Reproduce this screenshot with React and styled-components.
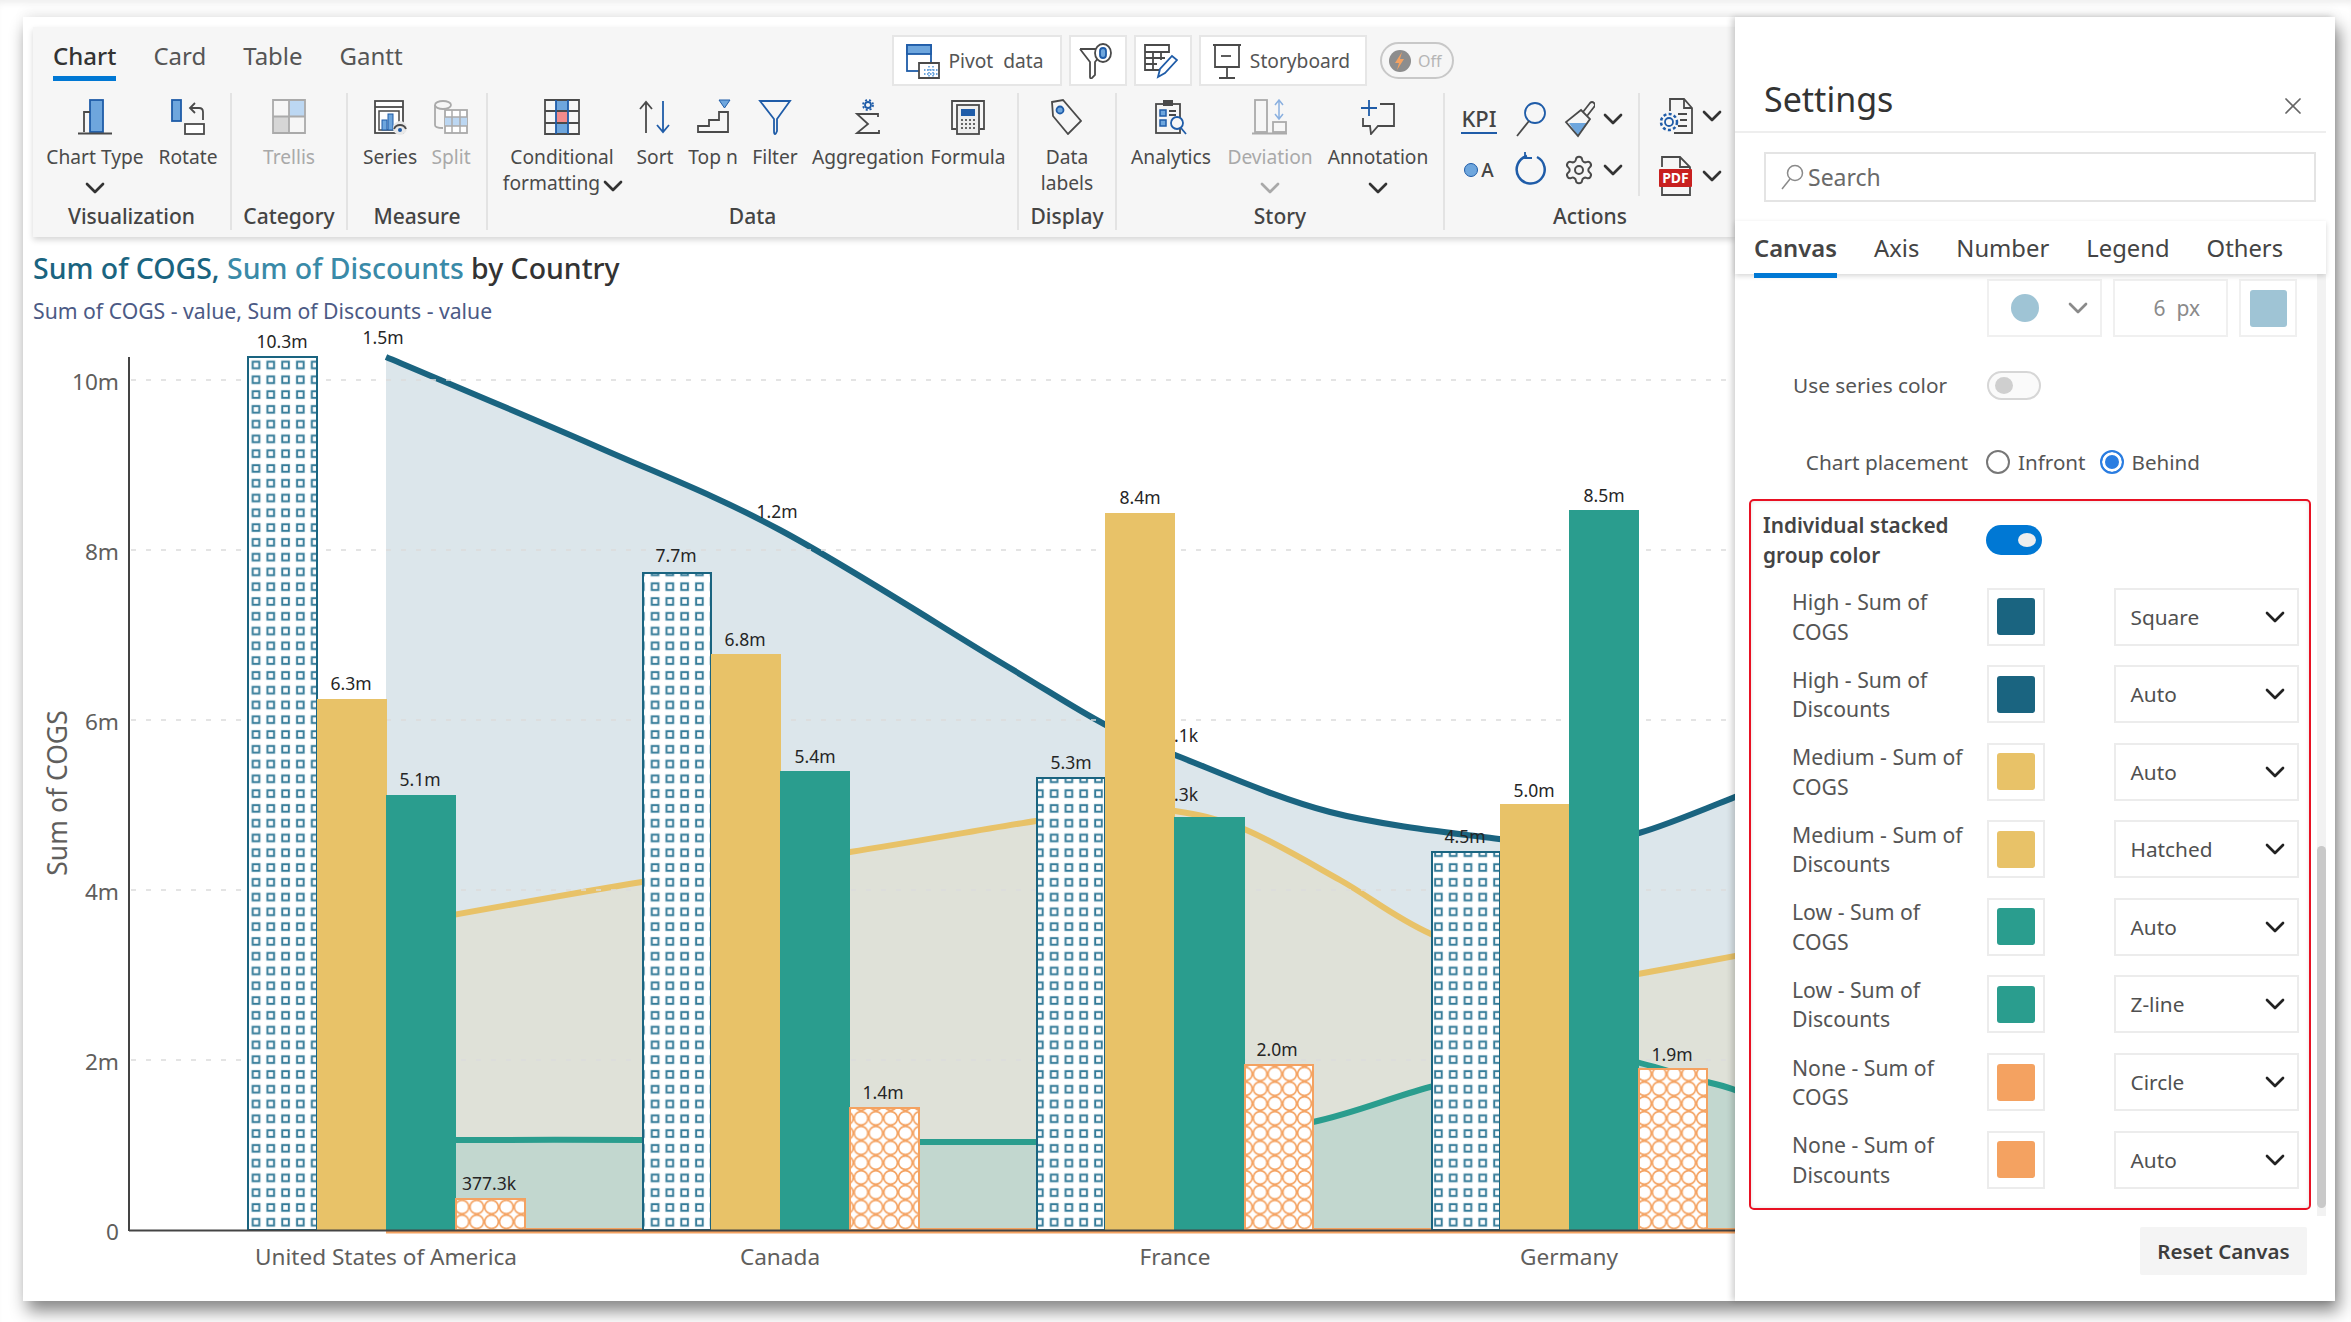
import React from "react";
import styled, { createGlobalStyle } from "styled-components";
import { ChevronDown, X, Settings as GearIcon } from "lucide-react";

const FONT = `"Noto Sans", "Open Sans", sans-serif`;
const NAVY = "#1a6480";
const GOLD = "#e8c268";
const TEAL = "#2a9d8e";
const ORANGE = "#f4a261";
const ICON_BLUE = "#6ea6dd";
const ICON_DARK = "#1f5ca8";
const ICON_GRAY = "#4a4a4a";

const GlobalStyle = createGlobalStyle`
html, body {
  margin: 0;
  padding: 0;
  background: #fff;
  font-family: ${FONT};
}
* { box-sizing: border-box; }
`;

const Page = styled.div`
  width: 2351px;
  height: 1322px;
  overflow: hidden;
  padding: 17px 16px 21px 23px;
  box-shadow: inset 0 6px 6px -3px rgba(0, 0, 0, 0.07);
`;
const Card = styled.div`
  display: flex;
  height: 1284px;
  background: #fff;
  box-shadow: 4px 10px 16px rgba(0, 0, 0, 0.48), 0 -8px 12px rgba(0, 0, 0, 0.03);
`;
const Main = styled.div`
  width: 1712px;
  flex: none;
  padding: 10px 0 0 10px;
  overflow: hidden;
`;
const Ribbon = styled.div`
  position: relative;
  z-index: 2;
  height: 210px;
  background: #f6f6f6;
  box-shadow: 0 3px 6px rgba(0, 0, 0, 0.16);
`;
const TabRow = styled.div`
  display: flex;
  align-items: flex-start;
  height: 66px;
  padding: 8px 0 0 20px;
`;
const TabList = styled.div`
  display: flex;
  gap: 37px;
  width: 350px;
`;
const Tab = styled.div`
  font-size: 24px;
  line-height: 41px;
  height: 46px;
  color: ${(p) => (p.$active ? "#333" : "#555")};
  font-weight: ${(p) => (p.$active ? 500 : 400)};
  border-bottom: ${(p) => (p.$active ? "5px solid #0078d4" : "none")};
`;
const QuickButtons = styled.div`
  display: flex;
  align-items: center;
  margin-left: 489px;
  gap: 7px;
`;
const QuickButton = styled.div`
  display: flex;
  align-items: center;
  justify-content: center;
  gap: 8px;
  width: ${(p) => p.$w}px;
  height: 51px;
  padding-right: 4px;
  background: #fff;
  border: 2px solid #e6e6e6;
  font-size: 19.2px;
  color: #555;
`;
const SpeedToggle = styled.div`
  display: flex;
  align-items: center;
  gap: 6px;
  width: 74px;
  height: 37px;
  margin-left: 6px;
  padding-left: 6px;
  border: 2px solid #c8c8c8;
  border-radius: 19px;
  font-size: 16px;
  color: #b5b5b5;
`;
const GroupRow = styled.div`
  display: flex;
  height: 137px;
`;
const Group = styled.div`
  display: flex;
  flex-direction: column;
  width: ${(p) => p.$w}px;
  flex: ${(p) => (p.$last ? "1" : "none")};
  padding-left: ${(p) => p.$pad || 0}px;
  border-right: ${(p) => (p.$last ? "none" : "2px solid #e3e3e3")};
`;
const GroupItems = styled.div`
  display: flex;
  height: 110px;
`;
const GroupLabel = styled.div`
  margin-left: ${(p) => (p.$pad ? -p.$pad : 0)}px;
  text-align: center;
  font-size: 21px;
  line-height: 28px;
  font-weight: 500;
  color: #444;
`;
const RibbonItem = styled.div`
  display: flex;
  flex-direction: column;
  align-items: center;
  width: ${(p) => p.$w}px;
  flex: none;
  padding-top: 5px;
  color: ${(p) => (p.$off ? "#a9a9a9" : "#4a4a4a")};
`;
const IconBox = styled.div`
  display: flex;
  align-items: center;
  justify-content: center;
  height: 37px;
  margin-bottom: 9px;
`;
const ItemText = styled.div`
  text-align: center;
  font-size: 19.2px;
  line-height: 26px;
  white-space: nowrap;
`;
const Chev = styled(ChevronDown).attrs({ size: 32, strokeWidth: 2 })`
  flex: none;
  margin: -8px;
`;
const ChevronLine = styled.div`
  display: flex;
  align-items: center;
  justify-content: center;
  height: 26px;
  margin-top: 5px;
  color: ${(p) => (p.$off ? "#a9a9a9" : "#333")};
`;
const InlineChevron = styled.span`
  display: inline-block;
  vertical-align: -4px;
  margin-left: 5px;
  color: #333;
  line-height: 0;
`;
const ActionItems = styled.div`
  display: flex;
  height: 110px;
`;
const ActionGrid = styled.div`
  display: grid;
  grid-template-columns: 54px 50px 72px;
  grid-auto-rows: 51px;
  align-items: center;
  justify-items: center;
  width: 195px;
  height: 103px;
  padding-left: 7px;
  border-right: 2px solid #e3e3e3;
`;
const ChevronPair = styled.div`
  display: flex;
  align-items: center;
  gap: 10px;
  color: #333;
`;
const ExportColumn = styled.div`
  display: flex;
  flex-direction: column;
  padding: 4px 0 0 18px;
  gap: 20px;
`;
const KpiMark = styled.div`
  font-size: 22px;
  line-height: 28px;
  font-weight: 500;
  color: #444;
  border-bottom: 2px solid ${ICON_DARK};
`;
const LegendMark = styled.div`
  display: flex;
  align-items: center;
  gap: 3px;
  font-size: 19px;
  font-weight: 500;
  color: #444;
`;
const LegendDot = styled.span`
  width: 14px;
  height: 14px;
  border-radius: 50%;
  background: ${ICON_BLUE};
  border: 1px solid ${ICON_DARK};
`;
const ChartTitle = styled.div`
  margin: 11px 0 0 0;
  font-size: 28.45px;
  line-height: 40px;
  font-weight: 500;
  color: #333;
  white-space: nowrap;
`;
const TitlePart = styled.span`
  color: ${(p) => p.$c};
`;
const ChartSubtitle = styled.div`
  margin: 8px 0 0 0;
  font-size: 21.2px;
  line-height: 30px;
  color: #4c5a85;
  white-space: nowrap;
`;
const ChartSvg = styled.svg`
  display: block;
  margin-top: -4px;
`;
const DataLabel = styled.text`
  font-size: 17.5px;
  fill: #252525;
  text-anchor: middle;
  dominant-baseline: central;
`;
const AxisLabel = styled.text`
  font-size: ${(p) => p.$size || 22.6}px;
  fill: #605e5c;
  text-anchor: ${(p) => p.$anchor || "middle"};
  dominant-baseline: central;
`;

const Panel = styled.div`
  position: relative;
  z-index: 3;
  display: flex;
  flex-direction: column;
  flex: 1;
  padding-right: 9px;
  background: #fff;
  box-shadow: -3px 0 6px rgba(0, 0, 0, 0.18);
`;
const PanelHead = styled.div`
  display: flex;
  align-items: flex-start;
  justify-content: space-between;
  height: 116px;
  padding: 58px 19px 0 29px;
  border-bottom: 2px solid #eee;
`;
const PanelTitle = styled.div`
  font-size: 34px;
  line-height: 54px;
  margin-top: -3px;
  color: #333;
`;
const CloseBox = styled.div`
  margin-top: 17px;
  color: #666;
  line-height: 0;
`;
const SearchWrap = styled.div`
  height: 88px;
  padding: 19px 10px 0 29px;
`;
const SearchField = styled.div`
  display: flex;
  align-items: center;
  gap: 4px;
  height: 50px;
  padding-left: 14px;
  border: 2px solid #e4e4e4;
  font-size: 23px;
  color: #6a6a6a;
`;
const PanelTabs = styled.div`
  position: relative;
  z-index: 2;
  display: flex;
  height: 53px;
  padding-left: 19px;
  background: #fff;
  box-shadow: 0 2px 5px rgba(0, 0, 0, 0.16);
`;
const PanelTab = styled.div`
  position: relative;
  margin-right: ${(p) => p.$gap}px;
  font-size: 23.8px;
  line-height: 55px;
  color: #444;
  font-weight: ${(p) => (p.$active ? 600 : 400)};
  &::after {
    content: "";
    display: ${(p) => (p.$active ? "block" : "none")};
    position: absolute;
    left: 0;
    right: 0;
    bottom: -4px;
    height: 5px;
    background: #0078d4;
  }
`;
const PanelBody = styled.div`
  display: flex;
  height: 942px;
`;
const BodyContent = styled.div`
  width: 582px;
  flex: none;
`;
const ScrollTrack = styled.div`
  width: 9px;
  flex: none;
  padding-top: 572px;
  background: #f2f2f2;
`;
const ScrollThumb = styled.div`
  height: 362px;
  border-radius: 5px;
  background: #c9c9c9;
`;
const MarkerRow = styled.div`
  display: flex;
  gap: 11px;
  margin: 5px 0 0 252px;
`;
const MarkerBox = styled.div`
  display: flex;
  align-items: center;
  justify-content: ${(p) => p.$justify || "center"};
  width: ${(p) => p.$w}px;
  height: 58px;
  padding: ${(p) => p.$pad || "0"};
  border: 2px solid #f0f0f0;
  font-size: 21px;
  color: #8a8a8a;
`;
const MarkerDot = styled.span`
  width: 28px;
  height: 28px;
  border-radius: 50%;
  background: #9fc4d5;
`;
const MarkerSwatch = styled.span`
  width: 37px;
  height: 37px;
  border-radius: 3px;
  background: #9fc4d5;
`;
const SettingRow = styled.div`
  display: flex;
  align-items: center;
  height: 30px;
  margin-top: ${(p) => p.$top}px;
`;
const SettingLabel = styled.div`
  width: 252px;
  flex: none;
  padding: 0 19px 0 58px;
  text-align: ${(p) => (p.$right ? "right" : "left")};
  font-size: 20.8px;
  color: #555;
  white-space: nowrap;
`;
const Switch = styled.div`
  display: flex;
  align-items: center;
  justify-content: ${(p) => (p.$on ? "flex-end" : "flex-start")};
  width: ${(p) => (p.$on ? 56 : 54)}px;
  height: ${(p) => (p.$on ? 30 : 29)}px;
  padding: 0 6px;
  border-radius: 15px;
  background: ${(p) => (p.$on ? "#0078d4" : "#fafafa")};
  border: ${(p) => (p.$on ? "none" : "2px solid #d6d6d6")};
  &::after {
    content: "";
    width: 18px;
    height: ${(p) => (p.$on ? 14 : 17)}px;
    border-radius: 50%;
    background: ${(p) => (p.$on ? "#eee" : "#cfcfcf")};
  }
`;
const RadioGroup = styled.div`
  display: flex;
  align-items: center;
  margin-left: -1px;
  font-size: 20.6px;
  color: #555;
`;
const RadioMark = styled.span`
  width: 24px;
  height: 24px;
  margin: 0 8px 0 0;
  border-radius: 50%;
  border: 2px solid ${(p) => (p.$on ? "#2a7de1" : "#777")};
  background: ${(p) => (p.$on ? "#2a7de1" : "#fff")};
  box-shadow: ${(p) => (p.$on ? "inset 0 0 0 3px #fff" : "none")};
`;
const RadioText = styled.span`
  margin-right: ${(p) => p.$gap || 0}px;
`;
const GroupColorBox = styled.div`
  width: 562px;
  height: 711px;
  margin: 22px 0 0 14px;
  padding-top: 8px;
  border: 2.5px solid #e81123;
  border-radius: 5px;
  box-shadow: inset 0 0 4px rgba(0, 0, 0, 0.12);
`;
const GroupHead = styled.div`
  display: flex;
  align-items: center;
  height: 62px;
  margin-bottom: 16.5px;
`;
const GroupHeadText = styled.div`
  width: 235px;
  flex: none;
  padding-left: 12px;
  font-size: 20.8px;
  line-height: 30px;
  font-weight: 600;
  color: #444;
`;
const ColorRows = styled.div`
  display: grid;
  grid-auto-rows: 58px;
  row-gap: 19.6px;
`;
const ColorRow = styled.div`
  display: flex;
  align-items: center;
`;
const ColorLabel = styled.div`
  width: 235.5px;
  flex: none;
  padding: 0 14px 0 41px;
  font-size: 21.2px;
  line-height: 29.5px;
  color: #555;
`;
const SwatchBox = styled.div`
  display: flex;
  align-items: center;
  justify-content: center;
  width: 58px;
  height: 58px;
  flex: none;
  border: 2px solid #ececec;
`;
const Swatch = styled.span`
  width: 38px;
  height: 37px;
  border-radius: 3px;
  background: ${(p) => p.$c};
`;
const PatternSelect = styled.div`
  display: flex;
  align-items: center;
  justify-content: space-between;
  width: 185px;
  height: 58px;
  margin-left: 69px;
  padding: 0 14px 0 15px;
  border: 2px solid #ececec;
  font-size: 20.8px;
  color: #505050;
`;
const PanelFoot = styled.div`
  display: flex;
  justify-content: flex-end;
  padding: 11px 19px 0 0;
`;
const ResetButton = styled.div`
  display: flex;
  align-items: center;
  justify-content: center;
  width: 167px;
  height: 48px;
  border-radius: 2px;
  background: #f4f4f4;
  font-size: 20.5px;
  font-weight: 600;
  color: #3d3d3d;
`;

/* ribbon icons, drawn on a 36 unit box */
const Icon = ({ w = 36, h = 36, children }) => (
  <svg width={w} height={h} viewBox={`0 0 ${w} ${h}`} fill="none" strokeWidth="1.8">
    {children}
  </svg>
);

const ChartTypeIcon = () => (
  <Icon>
    <rect x="13" y="1" width="13" height="32" fill={ICON_BLUE} stroke={ICON_DARK} />
    <path d="M7 33V13h6" stroke={ICON_GRAY} />
    <path d="M1 34.5h34" stroke={ICON_GRAY} />
  </Icon>
);
const RotateIcon = () => (
  <Icon>
    <rect x="2" y="1" width="9" height="21" fill={ICON_BLUE} stroke={ICON_DARK} />
    <path d="M33 21v-8q0-4-4-4h-8M25 4l-5 5 5 5" stroke={ICON_GRAY} />
    <rect x="15" y="25" width="19" height="10" fill="#fff" stroke={ICON_GRAY} />
  </Icon>
);
const TrellisIcon = () => (
  <Icon>
    <rect x="18" y="1" width="16" height="16" fill="#bcd7f2" />
    <rect x="2" y="18" width="16" height="16" fill="#d6d6d6" />
    <path d="M2 1h32v33H2zM18 1v33M2 17.500h32" stroke="#aaa" />
  </Icon>
);
const SeriesIcon = () => (
  <Icon>
    <rect x="3" y="2" width="28" height="32" fill="#fff" stroke={ICON_GRAY} />
    <path d="M3 8h28" stroke={ICON_GRAY} />
    <rect x="7" y="12" width="20" height="19" stroke={ICON_GRAY} strokeWidth="1.500" />
    <rect x="10" y="21" width="5" height="10" fill={ICON_BLUE} stroke={ICON_DARK} strokeWidth="1" />
    <rect x="16" y="15" width="5" height="16" fill={ICON_BLUE} stroke={ICON_DARK} strokeWidth="1" />
    <circle cx="28" cy="29" r="7" fill="#e8e8e8" />
    <path d="M22 30a6.500 6.500 0 0 1 12 0" stroke={ICON_GRAY} />
    <circle cx="28" cy="31" r="2" fill={ICON_DARK} />
  </Icon>
);
const SplitIcon = () => (
  <Icon>
    <ellipse cx="10" cy="6" rx="8" ry="4" stroke="#aaa" />
    <path d="M2 6v20q0 3 8 3" stroke="#aaa" />
    <rect x="12" y="11" width="22" height="23" fill="#fff" stroke="#aaa" />
    <rect x="12" y="18" width="22" height="9" fill="#bcd7f2" />
    <path d="M12 18h22M12 27h22M19 11v23M27 11v23" stroke="#aaa" strokeWidth="1.500" />
  </Icon>
);
const ConditionalIcon = () => (
  <Icon>
    <rect x="12" y="1" width="12" height="11" fill={ICON_BLUE} />
    <rect x="12" y="24" width="12" height="11" fill={ICON_BLUE} />
    <rect x="12" y="12" width="12" height="12" fill="#f38b8b" />
    <path d="M1 1h34v34H1zM1 12h34M1 24h34" stroke={ICON_GRAY} />
    <path d="M12 1v34M24 1v34" stroke={ICON_DARK} />
  </Icon>
);
const SortIcon = () => (
  <Icon>
    <path d="M9 34V3M3 10l6-7 6 7" stroke={ICON_GRAY} />
    <path d="M26 2v31M20 26l6 7 6-7" stroke={ICON_DARK} />
  </Icon>
);
const TopNIcon = () => (
  <Icon>
    <path d="M3 33h30V13h-9v8h-10v6H3z" stroke={ICON_GRAY} />
    <path d="M24 1h11l-5.500 8z" fill={ICON_BLUE} stroke={ICON_DARK} strokeWidth="1" />
  </Icon>
);
const FilterIcon = () => (
  <Icon>
    <path d="M3 2h30L20 20v12q-1 3-2 3t-1-3V20z" stroke={ICON_DARK} />
  </Icon>
);
const AggregationIcon = () => (
  <Icon>
    <path d="M28 18V15H7l11 10-11 9h22v-3" stroke={ICON_GRAY} />
    <circle cx="18" cy="6" r="3" stroke={ICON_DARK} />
    <circle cx="18" cy="6" r="5" stroke={ICON_DARK} strokeDasharray="2 2" />
  </Icon>
);
const FormulaIcon = () => (
  <Icon>
    <path d="M6 30H2V2h32v28h-4" stroke={ICON_GRAY} />
    <rect x="7" y="6" width="22" height="29" fill="#eee" stroke={ICON_GRAY} />
    <rect x="11" y="10" width="14" height="7" fill={ICON_DARK} />
    <path d="M11 21h14M11 25h14M11 29h14" stroke="#666" strokeWidth="2" strokeDasharray="2 2" />
  </Icon>
);
const TagIcon = () => (
  <Icon>
    <path d="M3 3l11-2 18 21-13 13L4 17z" stroke={ICON_GRAY} />
    <circle cx="11" cy="11" r="3.500" fill={ICON_BLUE} stroke={ICON_DARK} />
  </Icon>
);
const AnalyticsIcon = () => (
  <Icon>
    <rect x="3" y="5" width="24" height="29" stroke={ICON_GRAY} />
    <rect x="10" y="1" width="10" height="6" fill={ICON_GRAY} />
    <rect x="7" y="11" width="6" height="6" fill={ICON_BLUE} stroke={ICON_DARK} strokeWidth="1.500" />
    <rect x="7" y="21" width="6" height="6" fill={ICON_BLUE} stroke={ICON_DARK} strokeWidth="1.500" />
    <path d="M16 12h7M16 16h7" stroke={ICON_GRAY} />
    <circle cx="24" cy="24" r="6" fill="#f6f6f6" stroke={ICON_DARK} />
    <path d="M28 29l5 6" stroke={ICON_DARK} />
  </Icon>
);
const DeviationIcon = () => (
  <Icon>
    <rect x="3" y="1" width="12" height="32" stroke="#aaa" />
    <rect x="21" y="23" width="13" height="10" stroke="#aaa" />
    <path d="M0 34.500h35" stroke="#aaa" />
    <path d="M27 1v19M23 6l4-5 4 5M23 15l4 5 4-5" stroke="#8ab0e0" strokeWidth="1.500" />
  </Icon>
);
const AnnotationIcon = () => (
  <Icon>
    <path d="M9 1v16M1 9h16" stroke={ICON_DARK} />
    <path d="M20 5h14v22H18l-7 8-1-8H3v-8" stroke={ICON_GRAY} />
  </Icon>
);
const LensIcon = () => (
  <Icon w={32} h={38}>
    <circle cx="20" cy="13" r="10" stroke={ICON_DARK} />
    <path d="M14 21L2 36" stroke={ICON_GRAY} />
  </Icon>
);
const BrushIcon = () => (
  <Icon w={32} h={38}>
    <path d="M6 23h19L15 36z" fill={ICON_BLUE} />
    <path d="M18 10l9 9-12 17L3 22zM20 12l7-9q2-2 4 0t0 4l-7 9" stroke={ICON_GRAY} />
  </Icon>
);
const ResetIcon = () => (
  <Icon w={32} h={38}>
    <path d="M12 5A14 14 0 1 0 22 6" stroke={ICON_DARK} strokeWidth="2.500" />
    <path d="M10 1v6h7" stroke={ICON_DARK} />
  </Icon>
);
const DocGearIcon = () => (
  <Icon w={36} h={38}>
    <path d="M12 14V2h14l8 9v25H16" stroke={ICON_GRAY} />
    <path d="M26 2v9h8M20 17h9M22 23h7M20 29h9" stroke={ICON_GRAY} />
    <circle cx="11" cy="25" r="4" stroke={ICON_DARK} />
    <circle cx="11" cy="25" r="8" stroke={ICON_DARK} strokeWidth="2.500" strokeDasharray="3 2.300" />
  </Icon>
);
const PdfIcon = () => (
  <Icon w={36} h={42}>
    <path d="M4 12V2h18l10 10v6M4 32v8h28v-8M22 2v10h10" stroke={ICON_GRAY} />
    <rect x="1" y="14" width="33" height="18" rx="1" fill="#c8201f" />
    <text x="17.500" y="28" textAnchor="middle" fontSize="14" fontWeight="700" fill="#fff" fontFamily={FONT}>
      PDF
    </text>
  </Icon>
);
const PivotIcon = () => (
  <Icon w={34} h={36}>
    <rect x="1" y="2" width="24" height="26" fill="#fff" stroke={ICON_DARK} />
    <rect x="1" y="2" width="24" height="9" fill={ICON_BLUE} stroke={ICON_DARK} />
    <path d="M13 35V20h20v15z" fill="#fff" stroke={ICON_GRAY} />
    <path d="M23 23v11M27 23v11M18 27h15M18 31h15" stroke={ICON_BLUE} strokeDasharray="1.500 1.500" />
  </Icon>
);
const FunnelDbIcon = () => (
  <Icon w={34} h={36}>
    <path d="M1 6h18M1 6l10 13v15q0 2 2 1l3-3V19l4-5" stroke={ICON_GRAY} />
    <ellipse cx="24" cy="10" rx="8" ry="9" fill="#fff" stroke={ICON_GRAY} />
    <rect x="21" y="5" width="6" height="10" rx="3" fill={ICON_BLUE} stroke={ICON_DARK} />
  </Icon>
);
const TablePenIcon = () => (
  <Icon w={34} h={36}>
    <path d="M1 2h24v7H1zM1 9v18h14M9 9v18M17 9v8M1 15h20M1 21h12" stroke={ICON_GRAY} />
    <path d="M14 34l2-8 12-13 5 4-12 13z" fill="#fff" stroke={ICON_DARK} />
  </Icon>
);
const EaselIcon = () => (
  <Icon w={30} h={36}>
    <path d="M1 2h28M3 2v22h24V2M15 24v10M7 35h16" stroke={ICON_GRAY} />
    <path d="M9 13h10" stroke={ICON_GRAY} />
  </Icon>
);
const BoltBadge = () => (
  <Icon w={24} h={24}>
    <circle cx="12" cy="12" r="11" fill="#8d8d8d" />
    <path d="M14 3l-7 11h4l-2 7 7-11h-4z" fill={ORANGE} />
  </Icon>
);
const FieldSearchIcon = () => (
  <Icon w={24} h={28}>
    <circle cx="15" cy="10" r="7.500" stroke="#8a8a8a" strokeWidth="1.500" />
    <path d="M10 16L2 26" stroke="#8a8a8a" strokeWidth="1.500" />
  </Icon>
);

/* chart data in page pixels */
const BASELINE = 1230;
const BAR_GROUPS = [
  { xs: [247, 317, 386, 455, 525], tops: [356, 699, 795, 1198] },
  { xs: [642, 711, 780, 849, 919], tops: [572, 654, 771, 1107] },
  { xs: [1036, 1105, 1174, 1244, 1313], tops: [777, 513, 817, 1064] },
  { xs: [1431, 1500, 1569, 1638, 1707], tops: [851, 804, 510, 1068] },
];
const BAR_FILL = ["url(#squares)", GOLD, TEAL, "url(#circles)"];
const BAR_EDGE = [NAVY, GOLD, TEAL, ORANGE];
const DATA_LABELS = [
  ["10.3m", 282, 341], ["1.5m", 383, 337], ["6.3m", 351, 683], ["5.1m", 420, 779],
  ["377.3k", 489, 1183], ["7.7m", 676, 555], ["6.8m", 745, 639], ["5.4m", 815, 756],
  ["1.4m", 883, 1092], ["1.2m", 777, 511], ["5.3m", 1071, 762], ["8.4m", 1140, 497],
  ["874.1k", 1171, 735], ["842.3k", 1171, 794], ["2.0m", 1277, 1049], ["4.5m", 1465, 836],
  ["5.0m", 1534, 790], ["8.5m", 1604, 495], ["1.9m", 1672, 1054],
];
const AREAS = [
  {
    fill: "#dce6eb",
    line: NAVY,
    pts: [[386, 357], [600, 448], [780, 530], [1000, 662], [1104, 724], [1175, 755], [1330, 812], [1499, 839], [1565, 843], [1639, 833], [1740, 795]],
  },
  {
    fill: "#dfe1d8",
    line: GOLD,
    pts: [[386, 927], [642, 882], [850, 852], [1036, 821], [1125, 811], [1175, 811], [1244, 829], [1340, 880], [1431, 934], [1569, 985], [1638, 974], [1740, 955]],
  },
  {
    fill: "#c2d7cf",
    line: TEAL,
    pts: [[386, 1140], [642, 1140], [919, 1142], [1036, 1142], [1174, 1143], [1313, 1122], [1430, 1087], [1569, 1052], [1707, 1082], [1740, 1092]],
  },
];
const Y_TICKS = [["10m", 381.5], ["8m", 551.5], ["6m", 721.5], ["4m", 891.5], ["2m", 1061.5], ["0", 1231.5]];
const GRID_LINES = [380, 550, 720, 890, 1060];
const X_LABELS = [["United States of America", 386], ["Canada", 780], ["France", 1175], ["Germany", 1569]];

// catmull-rom through the points, so the lines come out smooth
function smoothPath(pts) {
  let d = `M${pts[0][0]} ${pts[0][1]}`;
  for (let i = 0; i < pts.length - 1; i++) {
    const a = pts[i - 1] || pts[i];
    const b = pts[i];
    const c = pts[i + 1];
    const e = pts[i + 2] || c;
    d += `C${b[0] + (c[0] - a[0]) / 6} ${b[1] + (c[1] - a[1]) / 6} ${c[0] - (e[0] - b[0]) / 6} ${c[1] - (e[1] - b[1]) / 6} ${c[0]} ${c[1]}`;
  }
  return d;
}

function Chart() {
  return (
    <ChartSvg width="1702" height="979" viewBox="33 322 1702 979" fontFamily={FONT}>
      <defs>
        <pattern id="squares" patternUnits="userSpaceOnUse" x="248.610" y="357.610" width="14.780" height="14.780">
          <rect width="14.780" height="14.780" fill="#fff" />
          <rect x="4.090" y="4.090" width="6.600" height="6.600" fill="none" stroke="#bdd3dd" strokeWidth="2.600" />
          <rect x="4.090" y="4.090" width="6.600" height="6.600" fill="none" stroke="#2f7896" strokeWidth="1.600" />
        </pattern>
        <pattern id="circles" patternUnits="userSpaceOnUse" x="454.610" y="1199.610" width="14.780" height="14.780">
          <rect width="14.780" height="14.780" fill="#fff" />
          <circle cx="7.390" cy="7.390" r="6.800" fill="#fff" stroke={ORANGE} strokeWidth="1.600" />
        </pattern>
      </defs>
      {AREAS.map((a) => {
        const path = smoothPath(a.pts);
        const last = a.pts[a.pts.length - 1][0];
        return (
          <g key={a.line}>
            <path d={`${path}L${last} ${BASELINE}L386 ${BASELINE}Z`} fill={a.fill} />
            <path d={path} fill="none" stroke={a.line} strokeWidth="6" />
          </g>
        );
      })}
      {GRID_LINES.map((y) => (
        <line key={y} x1="131" x2="1735" y1={y} y2={y} stroke="#dcdcdc" strokeWidth="1.500" strokeDasharray="5 10" />
      ))}
      <rect x="386" y="1228" width="1350" height="5" fill={ORANGE} />
      {DATA_LABELS.map(([t, x, y]) => (
        <DataLabel key={t} x={x} y={y}>{t}</DataLabel>
      ))}
      {BAR_GROUPS.map((g) =>
        g.tops.map((top, i) => (
          <rect
            key={`${g.xs[0]}-${i}`}
            x={g.xs[i] + 1}
            y={top + 1}
            width={g.xs[i + 1] - g.xs[i] - 1}
            height={BASELINE - top - 1}
            fill={BAR_FILL[i]}
            stroke={BAR_EDGE[i]}
            strokeWidth="2"
          />
        ))
      )}
      <line x1="386" x2="1735" y1="1232.500" y2="1232.500" stroke={ORANGE} strokeWidth="2" />
      <line x1="129" x2="129" y1="357" y2="1231" stroke="#444" strokeWidth="2" />
      <line x1="129" x2="1735" y1="1230.500" y2="1230.500" stroke="#444" strokeWidth="2" />
      {Y_TICKS.map(([t, y]) => (
        <AxisLabel key={t} x="119" y={y} $anchor="end">{t}</AxisLabel>
      ))}
      {X_LABELS.map(([t, x]) => (
        <AxisLabel key={t} x={x} y="1256.500">{t}</AxisLabel>
      ))}
      <AxisLabel x="57" y="793" $size={26.5} transform="rotate(-90 57 793)">Sum of COGS</AxisLabel>
    </ChartSvg>
  );
}

const COLOR_ROWS = [
  ["High - Sum of COGS", NAVY, "Square"],
  ["High - Sum of Discounts", NAVY, "Auto"],
  ["Medium - Sum of COGS", GOLD, "Auto"],
  ["Medium - Sum of Discounts", GOLD, "Hatched"],
  ["Low - Sum of COGS", TEAL, "Auto"],
  ["Low - Sum of Discounts", TEAL, "Z-line"],
  ["None - Sum of COGS", ORANGE, "Circle"],
  ["None - Sum of Discounts", ORANGE, "Auto"],
];

function Item({ w, icon, text, second, chevron, off }) {
  return (
    <RibbonItem $w={w} $off={off}>
      <IconBox>{icon}</IconBox>
      <ItemText>{text}</ItemText>
      {second && <ItemText>{second}</ItemText>}
      {chevron && (
        <ChevronLine $off={off}>
          <Chev />
        </ChevronLine>
      )}
    </RibbonItem>
  );
}

export default function App() {
  return (
    <Page>
      <GlobalStyle />
      <Card>
        <Main>
          <Ribbon>
            <TabRow>
              <TabList>
                <Tab $active>Chart</Tab>
                <Tab>Card</Tab>
                <Tab>Table</Tab>
                <Tab>Gantt</Tab>
              </TabList>
              <QuickButtons>
                <QuickButton $w={170}><PivotIcon />Pivot&nbsp; data</QuickButton>
                <QuickButton $w={58}><FunnelDbIcon /></QuickButton>
                <QuickButton $w={58}><TablePenIcon /></QuickButton>
                <QuickButton $w={168}><EaselIcon />Storyboard</QuickButton>
                <SpeedToggle><BoltBadge />Off</SpeedToggle>
              </QuickButtons>
            </TabRow>
            <GroupRow>
              <Group $w={199} $pad={7}>
                <GroupItems>
                  <Item w={110} icon={<ChartTypeIcon />} text="Chart Type" chevron />
                  <Item w={76} icon={<RotateIcon />} text="Rotate" />
                </GroupItems>
                <GroupLabel $pad={7}>Visualization</GroupLabel>
              </Group>
              <Group $w={116}>
                <GroupItems>
                  <Item w={114} icon={<TrellisIcon />} text="Trellis" off />
                </GroupItems>
                <GroupLabel>Category</GroupLabel>
              </Group>
              <Group $w={140} $pad={6}>
                <GroupItems>
                  <Item w={72} icon={<SeriesIcon />} text="Series" />
                  <Item w={50} icon={<SplitIcon />} text="Split" off />
                </GroupItems>
                <GroupLabel $pad={6}>Measure</GroupLabel>
              </Group>
              <Group $w={531} $pad={9}>
                <GroupItems>
                  <RibbonItem $w={130}>
                    <IconBox><ConditionalIcon /></IconBox>
                    <ItemText>Conditional</ItemText>
                    <ItemText>
                      formatting
                      <InlineChevron><Chev /></InlineChevron>
                    </ItemText>
                  </RibbonItem>
                  <Item w={56} icon={<SortIcon />} text="Sort" />
                  <Item w={60} icon={<TopNIcon />} text="Top n" />
                  <Item w={64} icon={<FilterIcon />} text="Filter" />
                  <Item w={122} icon={<AggregationIcon />} text="Aggregation" />
                  <Item w={78} icon={<FormulaIcon />} text="Formula" />
                </GroupItems>
                <GroupLabel $pad={9}>Data</GroupLabel>
              </Group>
              <Group $w={98}>
                <GroupItems>
                  <Item w={96} icon={<TagIcon />} text="Data" second="labels" />
                </GroupItems>
                <GroupLabel>Display</GroupLabel>
              </Group>
              <Group $w={328} $pad={4}>
                <GroupItems>
                  <Item w={100} icon={<AnalyticsIcon />} text="Analytics" />
                  <Item w={98} icon={<DeviationIcon />} text="Deviation" chevron off />
                  <Item w={118} icon={<AnnotationIcon />} text="Annotation" chevron />
                </GroupItems>
                <GroupLabel $pad={4}>Story</GroupLabel>
              </Group>
              <Group $last>
                <ActionItems>
                  <ActionGrid>
                    <KpiMark>KPI</KpiMark>
                    <LensIcon />
                    <ChevronPair><BrushIcon /><Chev /></ChevronPair>
                    <LegendMark><LegendDot />A</LegendMark>
                    <ResetIcon />
                    <ChevronPair>
                      <GearIcon size={32} strokeWidth={1.5} color={ICON_GRAY} />
                      <Chev />
                    </ChevronPair>
                  </ActionGrid>
                  <ExportColumn>
                    <ChevronPair><DocGearIcon /><Chev /></ChevronPair>
                    <ChevronPair><PdfIcon /><Chev /></ChevronPair>
                  </ExportColumn>
                </ActionItems>
                <GroupLabel>Actions</GroupLabel>
              </Group>
            </GroupRow>
          </Ribbon>
          <ChartTitle>
            <TitlePart $c={NAVY}>Sum of COGS,</TitlePart> <TitlePart $c="#3a8aa8">Sum of Discounts</TitlePart> by Country
          </ChartTitle>
          <ChartSubtitle>Sum of COGS - value, Sum of Discounts - value</ChartSubtitle>
          <Chart />
        </Main>
        <Panel>
          <PanelHead>
            <PanelTitle>Settings</PanelTitle>
            <CloseBox><X size={28} strokeWidth={1.5} /></CloseBox>
          </PanelHead>
          <SearchWrap>
            <SearchField><FieldSearchIcon />Search</SearchField>
          </SearchWrap>
          <PanelTabs>
            <PanelTab $active $gap={37}>Canvas</PanelTab>
            <PanelTab $gap={37}>Axis</PanelTab>
            <PanelTab $gap={37}>Number</PanelTab>
            <PanelTab $gap={37}>Legend</PanelTab>
            <PanelTab $gap={0}>Others</PanelTab>
          </PanelTabs>
          <PanelBody>
            <BodyContent>
              <MarkerRow>
                <MarkerBox $w={115} $justify="space-between" $pad="0 14px 0 22px">
                  <MarkerDot />
                  <Chev />
                </MarkerBox>
                <MarkerBox $w={115} $justify="flex-end" $pad="0 26px 0 0">6&nbsp; px</MarkerBox>
                <MarkerBox $w={58}><MarkerSwatch /></MarkerBox>
              </MarkerRow>
              <SettingRow $top={33}>
                <SettingLabel>Use series color</SettingLabel>
                <Switch />
              </SettingRow>
              <SettingRow $top={47}>
                <SettingLabel $right>Chart placement</SettingLabel>
                <RadioGroup>
                  <RadioMark />
                  <RadioText $gap={14}>Infront</RadioText>
                  <RadioMark $on />
                  <RadioText>Behind</RadioText>
                </RadioGroup>
              </SettingRow>
              <GroupColorBox>
                <GroupHead>
                  <GroupHeadText>Individual stacked group color</GroupHeadText>
                  <Switch $on />
                </GroupHead>
                <ColorRows>
                  {COLOR_ROWS.map(([label, color, pattern]) => (
                    <ColorRow key={label}>
                      <ColorLabel>{label}</ColorLabel>
                      <SwatchBox><Swatch $c={color} /></SwatchBox>
                      <PatternSelect>
                        {pattern}
                        <Chev color="#222" />
                      </PatternSelect>
                    </ColorRow>
                  ))}
                </ColorRows>
              </GroupColorBox>
            </BodyContent>
            <ScrollTrack><ScrollThumb /></ScrollTrack>
          </PanelBody>
          <PanelFoot>
            <ResetButton>Reset Canvas</ResetButton>
          </PanelFoot>
        </Panel>
      </Card>
    </Page>
  );
}
